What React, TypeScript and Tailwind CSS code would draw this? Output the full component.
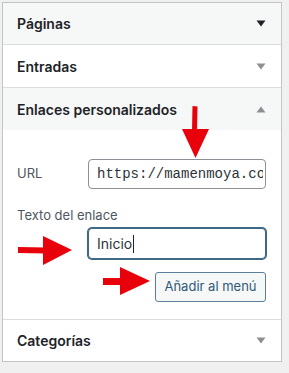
import React from "react";

const font = { fontFamily: "Inter, 'Noto Sans', sans-serif" };

function Caret({ up = false, dark = false }: { up?: boolean; dark?: boolean }) {
  return (
    <svg width="10" height="7" viewBox="0 0 10 7" className={dark ? "text-[#1d2327]" : "text-[#8c8f94]"}>
      {up ? <path d="M5 0.5 L9.5 6.5 L0.5 6.5 Z" fill="currentColor" /> : <path d="M0.5 0.5 L9.5 0.5 L5 6.5 Z" fill="currentColor" />}
    </svg>
  );
}

function Header({ title, up, dark, gray, className = "" }: { title: string; up?: boolean; dark?: boolean; gray?: boolean; className?: string }) {
  return (
    <div className={`flex items-center justify-between pl-[14px] pr-[15px] ${gray ? "bg-[#f6f7f7]" : "bg-white"} ${className}`}>
      <span className="text-[14px] font-semibold text-[#1d2327]">{title}</span>
      <Caret up={up} dark={dark} />
    </div>
  );
}

export default function App() {
  return (
    <div className="relative h-[373px] w-[289px] overflow-hidden bg-[#f0f0f1] pl-[2px] pt-[2px]" style={font}>
      <div className="w-[280px] border border-[#c3c4c7] bg-white">
        <Header title="Páginas" dark gray className="h-[42px] border-b border-[#dcdcde]" />
        <Header title="Entradas" className="h-[43px] border-b border-[#dcdcde]" />
        <Header title="Enlaces personalizados" up gray className="h-[42px]" />
        <div className="h-[190px] border-b border-[#dcdcde] pl-[14px] pr-[15px] pt-[29px]">
          <div className="flex items-center">
            <span className="w-[71px] text-[13px] text-[#50575e]">URL</span>
            <div className="h-[30px] w-[178px] rounded-[4px] border border-[#8c8f94] bg-white pl-[8px] pr-[2px]">
              <div className="overflow-hidden whitespace-nowrap text-[14px] leading-[28px] text-[#2c3338]" style={{ fontFamily: "'Liberation Mono', monospace" }}>
                https://mamenmoya.com
              </div>
            </div>
          </div>
          <div className="mt-[17px] text-[13px] leading-[18px] text-[#50575e]">Texto del enlace</div>
          <div className="ml-[71px] mt-[4px] flex h-[31px] w-[178px] items-center rounded-[4px] border border-[#3d6886] bg-white pl-[8px] shadow-[0_0_0_1px_#3d6886]">
            <span className="text-[14px] text-[#2c3338]">Inicio</span>
            <span className="ml-px h-[18px] w-px bg-[#1d2327]" />
          </div>
          <div className="mt-[13px] flex justify-end">
            <button className="h-[30px] w-[111px] rounded-[3px] border border-[#5a7f9c] bg-[#f6f7f7] text-[13px] text-[#2f5a7a]">
              Añadir al menú
            </button>
          </div>
        </div>
        <Header title="Categorías" className="h-[41px]" />
      </div>

      <svg className="absolute left-0 top-0" width="289" height="373" viewBox="0 0 289 373">
        <g fill="#e8000b">
          <path d="M192.5 106 L197.5 106.5 L197 131 L192 131 Z" />
          <path d="M182 129 L209 129 L195.5 158 Z" />
          <path d="M18 247 L46 247.5 L46 253.5 L18 253 Z" />
          <path d="M43 236 L72 250 L43 265 Z" />
          <path d="M103 278 L122 278 L122 285 L103 285 Z" />
          <path d="M120 267 L150 281 L120 295 Z" />
        </g>
      </svg>
    </div>
  );
}
